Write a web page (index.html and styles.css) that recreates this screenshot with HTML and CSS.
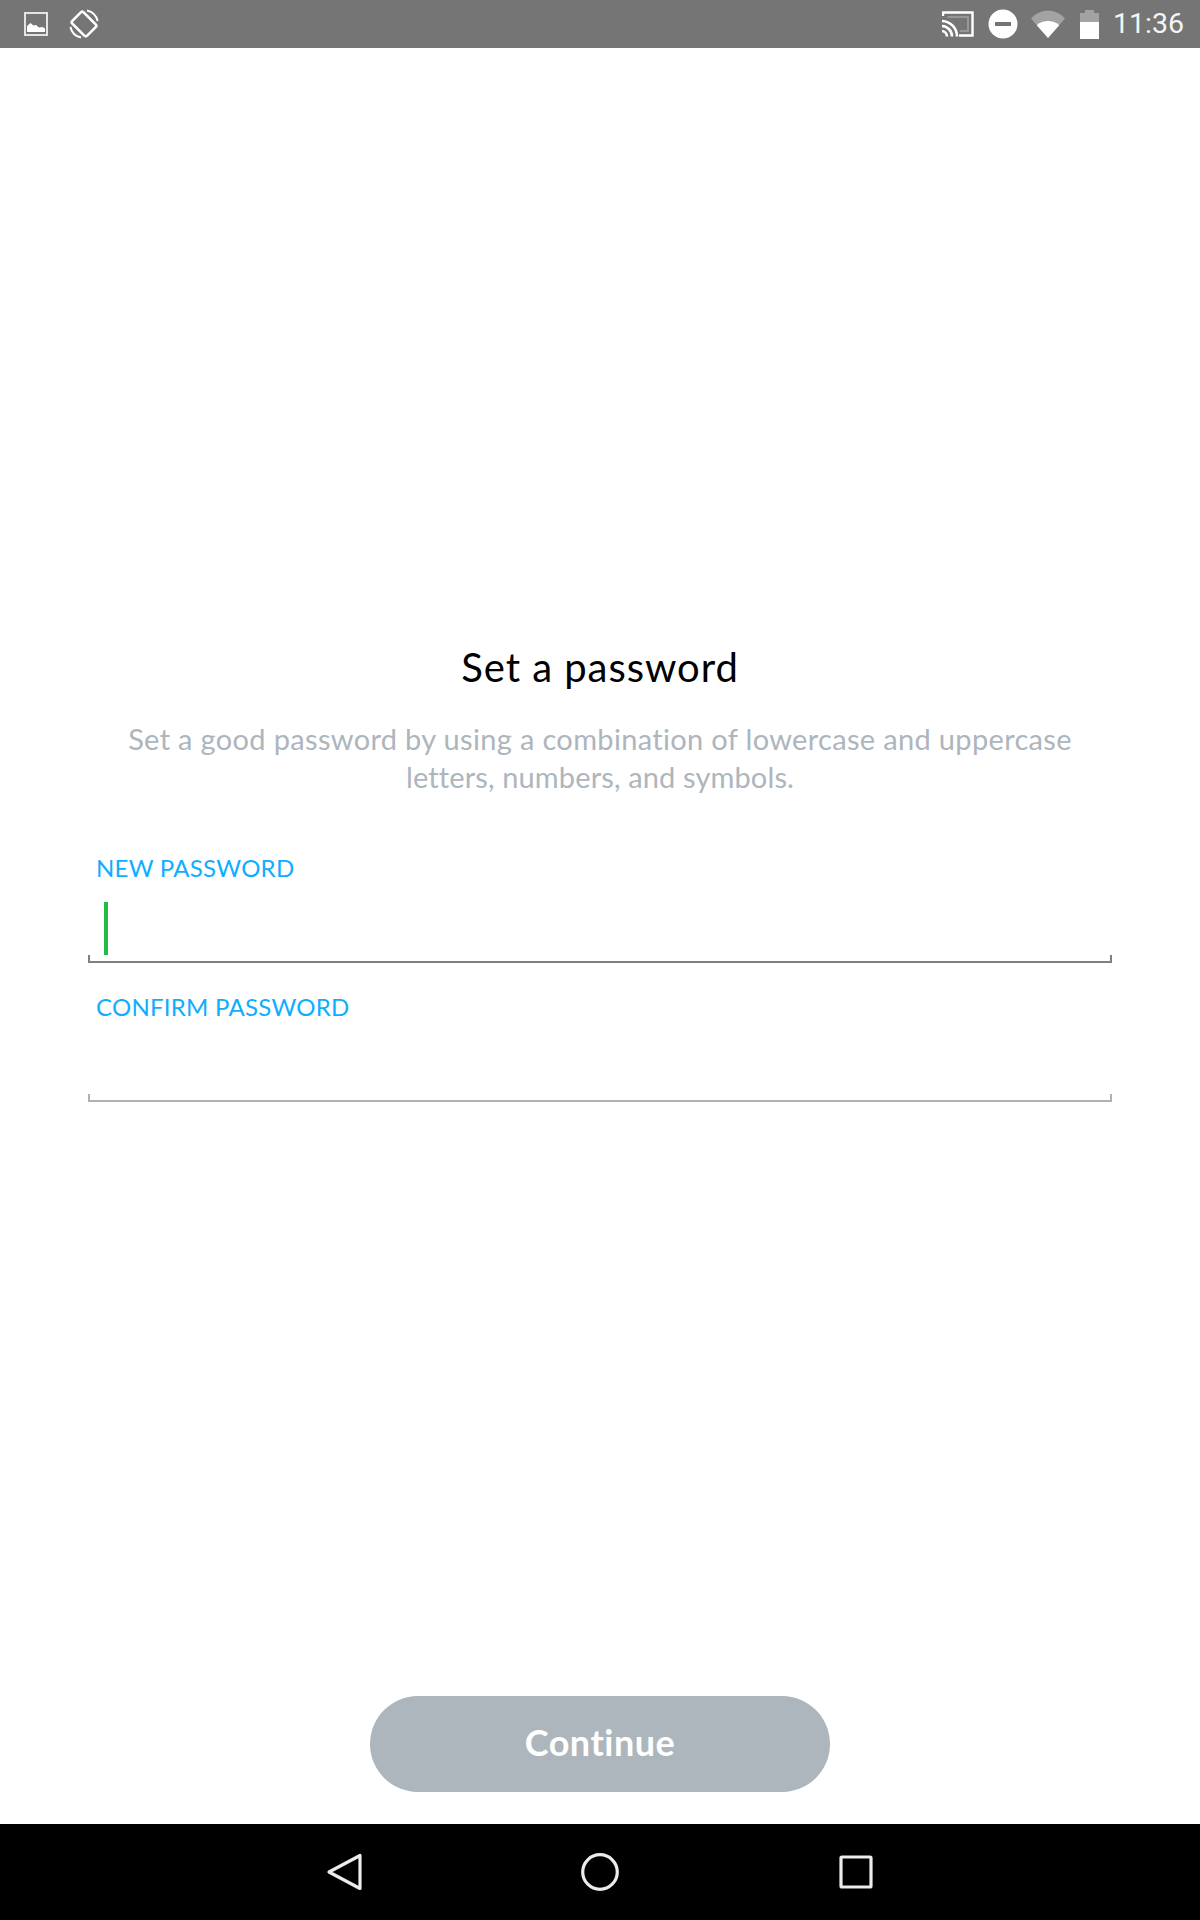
FILE: index.html
```html
<!DOCTYPE html>
<html lang="en">
<head>
<meta charset="utf-8">
<title>Set a password</title>
<link rel="stylesheet" href="styles.css">
</head>
<body>
<div class="screen">
  <header class="status">
    <div class="status-left">
      <svg class="ic-image" viewBox="0 0 24 24"><rect x="1" y="1" width="22" height="22" fill="none" stroke="#e4e4e4" stroke-width="2"/><path d="M3 20v-6l3.500-3 3 2.500 2.500-.5 3 2.500 3.500-.5 2.500 1.500V20z" fill="#fff"/></svg>
      <svg class="ic-rotate" viewBox="0 0 30 30"><rect x="7" y="4.500" width="16" height="21" rx="2" transform="rotate(-45 15 15)" fill="none" stroke="#fff" stroke-width="2.600"/><path d="M18 1.400A14 14 0 0 1 28.600 12M12 28.600A14 14 0 0 1 1.400 18" fill="none" stroke="#fff" stroke-width="2"/></svg>
    </div>
    <div class="status-right">
      <svg class="ic-cast" viewBox="0 0 32 26"><path d="M1 5V1.500h29.500v23H17" fill="none" stroke="#fff" stroke-width="2.400"/><path d="M5.500 6h20.500v14H18" fill="none" stroke="#fff" stroke-opacity=".25" stroke-width="2"/><path d="M0 10a15.500 15.500 0 0 1 15 15.500M0 15a10.500 10.500 0 0 1 10 10.500M0 20a5.500 5.500 0 0 1 5 5.500" fill="none" stroke="#fff" stroke-width="2.600"/></svg>
      <svg class="ic-dnd" viewBox="0 0 30 30"><circle cx="15" cy="15" r="14.500" fill="#fff"/><rect x="7" y="13" width="16" height="4" fill="#757575"/></svg>
      <svg class="ic-wifi" viewBox="0 0 34 28"><path d="M0 8.500C9-1.800 25-1.800 34 8.500L17 28z" fill="#a3a3a3"/><path d="M5.800 15.200C12 9.600 22 9.600 28.200 15.200L17 28z" fill="#fff"/></svg>
      <svg class="ic-battery" viewBox="0 0 19 29"><path d="M0 3h5V0h9v3h5v9H0z" fill="#a3a3a3"/><rect y="12" width="19" height="17" fill="#fff"/></svg>
      <span class="clock">11:36</span>
    </div>
  </header>

  <main class="content">
    <h1 class="title">Set a password</h1>
    <p class="lead">Set a good password by using a combination of lowercase and uppercase<br><span class="lead-tail">letters, numbers, and symbols.</span></p>
    <div class="fields">
      <div class="field field-active">
        <div class="field-label">NEW PASSWORD</div>
        <div class="field-input"><span class="caret"></span></div>
      </div>
      <div class="field">
        <div class="field-label">CONFIRM PASSWORD</div>
        <div class="field-input"></div>
      </div>
    </div>
    <div class="actions">
      <button class="continue" type="button">Continue</button>
    </div>
  </main>

  <nav class="navbar">
    <svg class="ic-nav" viewBox="0 0 38 38"><path d="M35 2.500V35.500L4 19z" fill="none" stroke="#ececec" stroke-width="3.200" stroke-linejoin="round"/></svg>
    <svg class="ic-nav" viewBox="0 0 38 38"><circle cx="19" cy="19" r="17.300" fill="none" stroke="#ececec" stroke-width="3.200"/></svg>
    <svg class="ic-nav" viewBox="0 0 38 38"><rect x="4" y="4" width="30" height="30" rx="1" fill="none" stroke="#ececec" stroke-width="3.200"/></svg>
  </nav>
</div>
</body>
</html>
```
FILE: styles.css
```css
* { box-sizing: border-box; }
html, body { margin: 0; padding: 0; }
body { background: #fff; font-family: "Lato", "Liberation Sans", sans-serif; }
.screen { width: 1200px; height: 1920px; display: flex; flex-direction: column; overflow: hidden; }

.status { height: 48px; flex: none; background: #757575; display: flex; justify-content: space-between; align-items: center; padding: 0 16px 0 24px; }
.status-left, .status-right { display: flex; align-items: center; }
.ic-image { width: 24px; height: 24px; display: block; }
.ic-rotate { width: 30px; height: 30px; margin-left: 21px; display: block; }
.ic-cast { width: 32px; height: 26px; display: block; }
.ic-dnd { width: 30px; height: 30px; margin-left: 14px; display: block; }
.ic-wifi { width: 34px; height: 28px; margin-left: 13px; display: block; }
.ic-battery { width: 19px; height: 29px; margin-left: 15px; display: block; }
.clock { font-family: Roboto, sans-serif; font-size: 28.5px; line-height: 48px; color: #f4f4f4; margin-left: 14px; }

.content { flex: 1; display: flex; flex-direction: column; padding: 595px 88px 32px; min-height: 0; }
.title { margin: 0; font-size: 40px; line-height: 48px; font-weight: 400; color: #000; text-align: center; letter-spacing: 0.95px; }
.lead { margin: 29px 0 0; font-size: 29px; line-height: 38px; color: #adb5bd; text-align: center; letter-spacing: 0.33px; }
.lead-tail { letter-spacing: 0.13px; }

.fields { margin-top: 57px; display: flex; flex-direction: column; gap: 29px; }
.field-label { font-size: 24px; line-height: 30px; color: #0fadff; padding-left: 8px; letter-spacing: 0.25px; }
.field-input { height: 80px; padding: 19px 0 0 16px; position: relative; border-bottom: 2px solid #b0b0b0; }
.field-input::before, .field-input::after { content: ""; position: absolute; bottom: -2px; width: 2px; height: 8px; background: #b0b0b0; }
.field-input::before { left: 0; }
.field-input::after { right: 0; }
.field-active .field-input { border-bottom-color: #7f7f7f; }
.field-active .field-input::before, .field-active .field-input::after { background: #7f7f7f; }
.caret { display: block; width: 4px; height: 53px; background: #22bb44; }

.actions { margin-top: auto; display: flex; justify-content: center; }
.continue { width: 460px; height: 96px; border: 0; border-radius: 48px; background: #adb5bd; color: #fff; font: 700 36px/92px "Lato", sans-serif; letter-spacing: 0.5px; padding: 0 0 4px; }

.navbar { height: 96px; flex: none; background: #000; display: flex; justify-content: center; align-items: center; gap: 218px; }
.ic-nav { width: 38px; height: 38px; display: block; }
```
